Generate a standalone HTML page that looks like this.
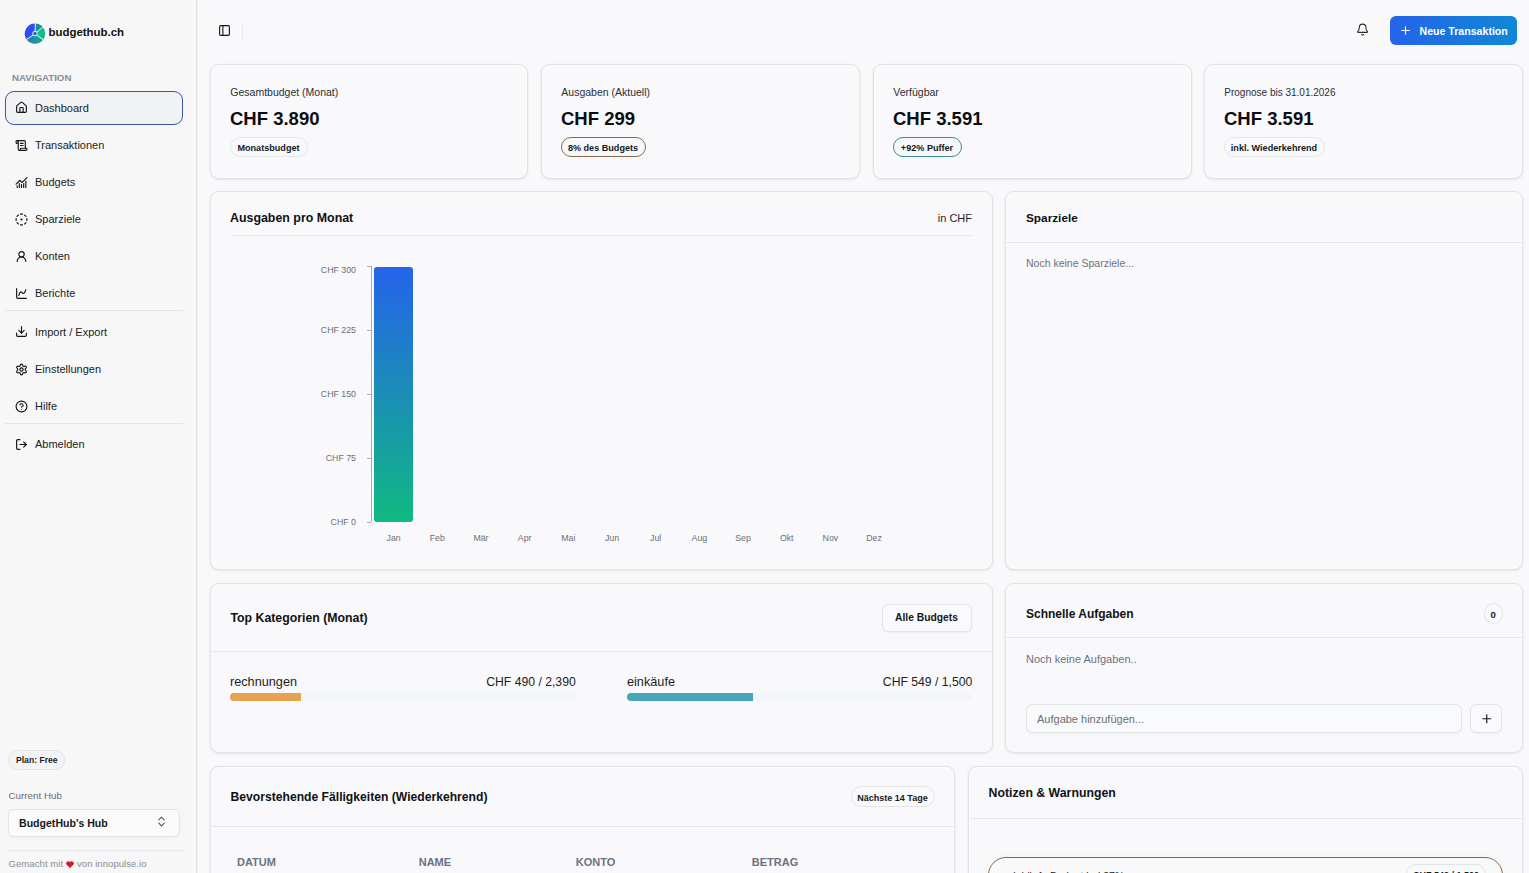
<!DOCTYPE html>
<html><head><meta charset="utf-8"><title>budgethub.ch</title>
<style>
html,body{margin:0;padding:0;}
body{width:1529px;height:873px;overflow:hidden;position:relative;background:#f9f9fb;font-family:"Liberation Sans",sans-serif;}
.t{position:absolute;white-space:nowrap;}
</style></head><body>
<div style="position:absolute;left:0px;top:0px;width:197px;height:873px;box-sizing:border-box;background:#f7f7f8;border-right:1px solid #e4e4e7;"></div>
<div style="position:absolute;left:193px;top:0px;width:1px;height:873px;box-sizing:border-box;background:#fcfcfd;"></div>
<div style="position:absolute;left:194px;top:0px;width:2px;height:873px;box-sizing:border-box;background:#f8f8fa;"></div>
<div style="position:absolute;left:197px;top:0px;width:1px;height:873px;box-sizing:border-box;background:#f2f2f4;"></div>
<svg style="position:absolute;left:24px;top:23px" width="22" height="22" viewBox="0 0 22 22">
<defs><linearGradient id="lgb" x1="0" y1="0" x2="1" y2="0"><stop offset="0" stop-color="#2476b8"/><stop offset="1" stop-color="#13b08c"/></linearGradient></defs>
<path d="M11 10.6 L2.64 16.45 A10.2 10.2 0 0 1 11.36 0.41 Z" fill="#3349f3"/>
<path d="M11 10.6 L11.36 0.41 A10.2 10.2 0 0 1 18.81 4.04 Z" fill="#1b8c9f"/>
<path d="M11 10.6 L18.81 4.04 A10.2 10.2 0 0 1 19.15 16.74 Z" fill="#10bd84"/>
<path d="M11 10.6 L19.15 16.74 A10.2 10.2 0 0 1 2.64 16.45 Z" fill="url(#lgb)"/>
<g stroke="#d4fbf3" stroke-width="1"><line x1="11" y1="10.6" x2="11.4" y2="0"/><line x1="11" y1="10.6" x2="19.3" y2="3.7"/><line x1="11" y1="10.6" x2="19.6" y2="17.1"/><line x1="11" y1="10.6" x2="2.2" y2="16.8"/></g>
<circle cx="11" cy="10.6" r="2.3" fill="#3d62b0" stroke="#d4fbf3" stroke-width="1"/>
</svg>
<div class="t" style="left:48.5px;top:26.97px;font-size:11.45px;line-height:11.45px;font-weight:700;color:#111;">budgethub.ch</div>
<div class="t" style="left:12px;top:72.75px;font-size:9.7px;line-height:9.7px;font-weight:700;color:#868d9b;">NAVIGATION</div>
<div style="position:absolute;left:5px;top:91px;width:178px;height:34px;box-sizing:border-box;background:#f1f2f4;border:1px solid #3d57a8;border-radius:9px;"></div>
<div class="t" style="left:35px;top:102.95px;font-size:11px;line-height:11px;font-weight:400;color:#1a1d22;">Dashboard</div>
<svg style="position:absolute;left:15.1px;top:101.1px" width="13" height="13" viewBox="0 0 24 24" fill="none" stroke="#121418" stroke-width="2.1" stroke-linecap="round" stroke-linejoin="round"><path d="M15 21v-8a1 1 0 0 0-1-1h-4a1 1 0 0 0-1 1v8"/><path d="M3 10a2 2 0 0 1 .709-1.528l7-5.999a2 2 0 0 1 2.582 0l7 5.999A2 2 0 0 1 21 10v9a2 2 0 0 1-2 2H5a2 2 0 0 1-2-2z"/></svg>
<div class="t" style="left:35px;top:140.35px;font-size:11px;line-height:11px;font-weight:400;color:#1a1d22;">Transaktionen</div>
<svg style="position:absolute;left:15.1px;top:138.5px" width="13" height="13" viewBox="0 0 24 24" fill="none" stroke="#121418" stroke-width="2.1" stroke-linecap="round" stroke-linejoin="round"><path d="M15 12h-5"/><path d="M15 8h-5"/><path d="M19 17V5a2 2 0 0 0-2-2H4"/><path d="M8 21h12a2 2 0 0 0 2-2v-1a1 1 0 0 0-1-1H11a1 1 0 0 0-1 1v1a2 2 0 1 1-4 0V5a2 2 0 1 0-4 0v2a1 1 0 0 0 1 1h3"/></svg>
<div class="t" style="left:35px;top:177.35px;font-size:11px;line-height:11px;font-weight:400;color:#1a1d22;">Budgets</div>
<svg style="position:absolute;left:15.1px;top:175.5px" width="13" height="13" viewBox="0 0 24 24" fill="none" stroke="#121418" stroke-width="2.1" stroke-linecap="round" stroke-linejoin="round"><path d="M12 16v5"/><path d="M16 14v7"/><path d="M20 10v11"/><path d="m22 3-8.646 8.646a.5.5 0 0 1-.708 0L9.354 8.354a.5.5 0 0 0-.707 0L2 15"/><path d="M4 18v3"/><path d="M8 14v7"/></svg>
<div class="t" style="left:35px;top:214.35px;font-size:11px;line-height:11px;font-weight:400;color:#1a1d22;">Sparziele</div>
<svg style="position:absolute;left:15.1px;top:212.5px" width="13" height="13" viewBox="0 0 24 24" fill="none" stroke="#121418" stroke-width="2.1" stroke-linecap="round" stroke-linejoin="round"><path d="M10.1 2.18a9.93 9.93 0 0 1 3.8 0"/><path d="M17.6 3.71a9.95 9.95 0 0 1 2.69 2.7"/><path d="M21.82 10.1a9.93 9.93 0 0 1 0 3.8"/><path d="M20.29 17.6a9.95 9.95 0 0 1-2.7 2.69"/><path d="M13.9 21.82a9.94 9.94 0 0 1-3.8 0"/><path d="M6.4 20.29a9.95 9.95 0 0 1-2.69-2.7"/><path d="M2.18 13.9a9.93 9.93 0 0 1 0-3.8"/><path d="M3.71 6.4a9.95 9.95 0 0 1 2.7-2.69"/><circle cx="12" cy="12" r="1"/></svg>
<div class="t" style="left:35px;top:251.35px;font-size:11px;line-height:11px;font-weight:400;color:#1a1d22;">Konten</div>
<svg style="position:absolute;left:15.1px;top:249.5px" width="13" height="13" viewBox="0 0 24 24" fill="none" stroke="#121418" stroke-width="2.1" stroke-linecap="round" stroke-linejoin="round"><circle cx="12" cy="8" r="5"/><path d="M20 21a8 8 0 0 0-16 0"/></svg>
<div class="t" style="left:35px;top:288.35px;font-size:11px;line-height:11px;font-weight:400;color:#1a1d22;">Berichte</div>
<svg style="position:absolute;left:15.1px;top:286.5px" width="13" height="13" viewBox="0 0 24 24" fill="none" stroke="#121418" stroke-width="2.1" stroke-linecap="round" stroke-linejoin="round"><path d="M3 3v16a2 2 0 0 0 2 2h16"/><path d="M7 16c.5-2 1.5-7 4-7 2 0 2 3 4 3 2.5 0 4.5-5 5-7"/></svg>
<div class="t" style="left:35px;top:326.65px;font-size:11px;line-height:11px;font-weight:400;color:#1a1d22;">Import / Export</div>
<svg style="position:absolute;left:15.1px;top:324.8px" width="13" height="13" viewBox="0 0 24 24" fill="none" stroke="#121418" stroke-width="2.1" stroke-linecap="round" stroke-linejoin="round"><path d="M21 15v4a2 2 0 0 1-2 2H5a2 2 0 0 1-2-2v-4"/><polyline points="7 10 12 15 17 10"/><line x1="12" x2="12" y1="15" y2="3"/></svg>
<div class="t" style="left:35px;top:364.35px;font-size:11px;line-height:11px;font-weight:400;color:#1a1d22;">Einstellungen</div>
<svg style="position:absolute;left:15.1px;top:362.5px" width="13" height="13" viewBox="0 0 24 24" fill="none" stroke="#121418" stroke-width="2.1" stroke-linecap="round" stroke-linejoin="round"><path d="M12.22 2h-.44a2 2 0 0 0-2 2v.18a2 2 0 0 1-1 1.73l-.43.25a2 2 0 0 1-2 0l-.15-.08a2 2 0 0 0-2.73.73l-.22.38a2 2 0 0 0 .73 2.73l.15.1a2 2 0 0 1 1 1.72v.51a2 2 0 0 1-1 1.74l-.15.09a2 2 0 0 0-.73 2.73l.22.38a2 2 0 0 0 2.73.73l.15-.08a2 2 0 0 1 2 0l.43.25a2 2 0 0 1 1 1.73V20a2 2 0 0 0 2 2h.44a2 2 0 0 0 2-2v-.18a2 2 0 0 1 1-1.73l.43-.25a2 2 0 0 1 2 0l.15.08a2 2 0 0 0 2.73-.73l.22-.39a2 2 0 0 0-.73-2.73l-.15-.08a2 2 0 0 1-1-1.74v-.5a2 2 0 0 1 1-1.74l.15-.09a2 2 0 0 0 .73-2.73l-.22-.38a2 2 0 0 0-2.73-.73l-.15.08a2 2 0 0 1-2 0l-.43-.25a2 2 0 0 1-1-1.73V4a2 2 0 0 0-2-2z"/><circle cx="12" cy="12" r="3"/></svg>
<div class="t" style="left:35px;top:401.35px;font-size:11px;line-height:11px;font-weight:400;color:#1a1d22;">Hilfe</div>
<svg style="position:absolute;left:15.1px;top:399.5px" width="13" height="13" viewBox="0 0 24 24" fill="none" stroke="#121418" stroke-width="2.1" stroke-linecap="round" stroke-linejoin="round"><circle cx="12" cy="12" r="10"/><path d="M9.09 9a3 3 0 0 1 5.83 1c0 2-3 3-3 3"/><path d="M12 17h.01"/></svg>
<div class="t" style="left:35px;top:439.35px;font-size:11px;line-height:11px;font-weight:400;color:#1a1d22;">Abmelden</div>
<svg style="position:absolute;left:15.1px;top:437.5px" width="13" height="13" viewBox="0 0 24 24" fill="none" stroke="#121418" stroke-width="2.1" stroke-linecap="round" stroke-linejoin="round"><path d="M9 21H5a2 2 0 0 1-2-2V5a2 2 0 0 1 2-2h4"/><polyline points="16 17 21 12 16 7"/><line x1="21" x2="9" y1="12" y2="12"/></svg>
<div style="position:absolute;left:5px;top:310px;width:178px;height:1px;box-sizing:border-box;background:#e4e5e8;"></div>
<div style="position:absolute;left:5px;top:423px;width:178px;height:1px;box-sizing:border-box;background:#e4e5e8;"></div>
<div style="position:absolute;left:8px;top:749.5px;width:57px;height:20px;box-sizing:border-box;background:#f4f4f6;border:1px solid #e4e4e7;border-radius:10px;"></div>
<div class="t" style="left:16px;top:756.39px;font-size:8.6px;line-height:8.6px;font-weight:700;color:#1a1d23;">Plan: Free</div>
<div class="t" style="left:8.5px;top:790.87px;font-size:9.8px;line-height:9.8px;font-weight:400;color:#686c73;">Current Hub</div>
<div style="position:absolute;left:8px;top:808.5px;width:172px;height:28.5px;box-sizing:border-box;background:#fbfbfb;border:1px solid #e3e4e7;border-radius:6px;box-shadow:0 1px 2px rgba(0,0,0,.04);"></div>
<div class="t" style="left:19px;top:817.52px;font-size:10.57px;line-height:10.57px;font-weight:700;color:#15181d;">BudgetHub's Hub</div>
<svg style="position:absolute;left:154.5px;top:814.5px" width="13" height="13" viewBox="0 0 24 24" fill="none" stroke="#555" stroke-width="2" stroke-linecap="round" stroke-linejoin="round"><path d="m7 15 5 5 5-5"/><path d="m7 9 5-5 5 5"/></svg>
<div style="position:absolute;left:7px;top:850px;width:177px;height:1px;box-sizing:border-box;background:#e6e7ea;"></div>
<div class="t" style="left:8.5px;top:859.00px;font-size:9.65px;line-height:9.65px;font-weight:400;color:#8a8e96;">Gemacht mit</div>
<svg style="position:absolute;left:66px;top:860.8px" width="8" height="7" viewBox="0 0 24 21"><path d="M12 21 L2.2 11.4 A6 6 0 0 1 12 3.2 A6 6 0 0 1 21.8 11.4 Z" fill="#dc1626"/></svg>
<div class="t" style="left:77px;top:859.00px;font-size:9.65px;line-height:9.65px;font-weight:400;color:#8a8e96;">von innopulse.io</div>
<svg style="position:absolute;left:218px;top:23.9px" width="13" height="13" viewBox="0 0 24 24" fill="none" stroke="#111" stroke-width="2" stroke-linecap="round" stroke-linejoin="round"><rect width="18" height="18" x="3" y="3" rx="2"/><path d="M9 3v18"/></svg>
<div style="position:absolute;left:242px;top:24px;width:1px;height:16px;box-sizing:border-box;background:#e8e9ec;"></div>
<svg style="position:absolute;left:1355.7px;top:23.3px" width="13.2" height="13.2" viewBox="0 0 24 24" fill="none" stroke="#2a2a2a" stroke-width="2" stroke-linecap="round" stroke-linejoin="round"><path d="M10.268 21a2 2 0 0 0 3.464 0"/><path d="M3.262 15.326A1 1 0 0 0 4 17h16a1 1 0 0 0 .74-1.673C19.41 13.956 18 12.499 18 8A6 6 0 0 0 6 8c0 4.499-1.411 5.956-2.738 7.326"/></svg>
<div style="position:absolute;left:1390px;top:16px;width:127px;height:29px;box-sizing:border-box;background:linear-gradient(90deg,#2563eb,#0f88d6);border-radius:6px;"></div>
<svg style="position:absolute;left:1398.8px;top:24.3px" width="13" height="13" viewBox="0 0 24 24" fill="none" stroke="#fff" stroke-width="2" stroke-linecap="round" stroke-linejoin="round"><path d="M5 12h14"/><path d="M12 5v14"/></svg>
<div class="t" style="left:1419.5px;top:25.89px;font-size:10.6px;line-height:10.6px;font-weight:700;color:#fff;">Neue Transaktion</div>
<div style="position:absolute;left:210px;top:64px;width:318px;height:115px;box-sizing:border-box;background:#f9f9fb;border:1px solid #e2e2e5;border-radius:9px;box-shadow:0 1px 3px rgba(0,0,0,.07),0 0 2px rgba(0,0,0,.03),inset 0 0 0 1px rgba(255,255,255,.55);"></div>
<div class="t" style="left:230.3px;top:87.48px;font-size:10.5px;line-height:10.5px;font-weight:400;color:#2b2e33;">Gesamtbudget (Monat)</div>
<div class="t" style="left:230px;top:109.98px;font-size:18.5px;line-height:18.5px;font-weight:700;color:#0b0d12;">CHF 3.890</div>
<div style="position:absolute;left:229.5px;top:137.3px;width:78px;height:20px;box-sizing:border-box;border:1px solid #e5e7eb;border-radius:10px;background:#f7f8fa;"></div>
<div class="t" style="left:-31.5px;width:600px;text-align:center;top:143.96px;font-size:9.1px;line-height:9.1px;font-weight:700;color:#15181d;">Monatsbudget</div>
<div style="position:absolute;left:541px;top:64px;width:319px;height:115px;box-sizing:border-box;background:#f9f9fb;border:1px solid #e2e2e5;border-radius:9px;box-shadow:0 1px 3px rgba(0,0,0,.07),0 0 2px rgba(0,0,0,.03),inset 0 0 0 1px rgba(255,255,255,.55);"></div>
<div class="t" style="left:561.3px;top:87.48px;font-size:10.5px;line-height:10.5px;font-weight:400;color:#2b2e33;">Ausgaben (Aktuell)</div>
<div class="t" style="left:561px;top:109.98px;font-size:18.5px;line-height:18.5px;font-weight:700;color:#0b0d12;">CHF 299</div>
<div style="position:absolute;left:560.5px;top:137.3px;width:85px;height:20px;box-sizing:border-box;border:1px solid #8a6a48;border-radius:10px;background:#f7f8fa;"></div>
<div class="t" style="left:303.0px;width:600px;text-align:center;top:143.96px;font-size:9.1px;line-height:9.1px;font-weight:700;color:#15181d;">8% des Budgets</div>
<div style="position:absolute;left:873px;top:64px;width:319px;height:115px;box-sizing:border-box;background:#f9f9fb;border:1px solid #e2e2e5;border-radius:9px;box-shadow:0 1px 3px rgba(0,0,0,.07),0 0 2px rgba(0,0,0,.03),inset 0 0 0 1px rgba(255,255,255,.55);"></div>
<div class="t" style="left:893.3px;top:87.48px;font-size:10.5px;line-height:10.5px;font-weight:400;color:#2b2e33;">Verfügbar</div>
<div class="t" style="left:893px;top:109.98px;font-size:18.5px;line-height:18.5px;font-weight:700;color:#0b0d12;">CHF 3.591</div>
<div style="position:absolute;left:892.5px;top:137.3px;width:69px;height:20px;box-sizing:border-box;border:1px solid #3f8797;border-radius:10px;background:#f7f8fa;"></div>
<div class="t" style="left:627.0px;width:600px;text-align:center;top:143.96px;font-size:9.1px;line-height:9.1px;font-weight:700;color:#15181d;">+92% Puffer</div>
<div style="position:absolute;left:1204px;top:64px;width:319px;height:115px;box-sizing:border-box;background:#f9f9fb;border:1px solid #e2e2e5;border-radius:9px;box-shadow:0 1px 3px rgba(0,0,0,.07),0 0 2px rgba(0,0,0,.03),inset 0 0 0 1px rgba(255,255,255,.55);"></div>
<div class="t" style="left:1224.3px;top:87.90px;font-size:10px;line-height:10px;font-weight:400;color:#2b2e33;">Prognose bis 31.01.2026</div>
<div class="t" style="left:1224px;top:109.98px;font-size:18.5px;line-height:18.5px;font-weight:700;color:#0b0d12;">CHF 3.591</div>
<div style="position:absolute;left:1223.5px;top:137.3px;width:101px;height:20px;box-sizing:border-box;border:1px solid #e5e7eb;border-radius:10px;background:#f7f8fa;"></div>
<div class="t" style="left:974.0px;width:600px;text-align:center;top:143.96px;font-size:9.1px;line-height:9.1px;font-weight:700;color:#15181d;">inkl. Wiederkehrend</div>
<div style="position:absolute;left:210px;top:191px;width:783px;height:379px;box-sizing:border-box;background:#f9f9fb;border:1px solid #e2e2e5;border-radius:9px;box-shadow:0 1px 3px rgba(0,0,0,.07),0 0 2px rgba(0,0,0,.03),inset 0 0 0 1px rgba(255,255,255,.55);"></div>
<div class="t" style="left:230px;top:212.16px;font-size:12.4px;line-height:12.4px;font-weight:700;color:#0f1115;">Ausgaben pro Monat</div>
<div class="t" style="left:372px;width:600px;text-align:right;top:213.35px;font-size:11px;line-height:11px;font-weight:400;color:#1f2227;">in CHF</div>
<div style="position:absolute;left:231px;top:235px;width:741px;height:1px;box-sizing:border-box;background:#e6e7ea;"></div>
<div style="position:absolute;left:371px;top:266px;width:1px;height:256px;box-sizing:border-box;background:#a9adb3;"></div>
<div style="position:absolute;left:367px;top:265.5px;width:4px;height:1px;box-sizing:border-box;background:#a9adb3;"></div>
<div class="t" style="left:-244px;width:600px;text-align:right;top:266.22px;font-size:8.8px;line-height:8.8px;font-weight:400;color:#6b6f76;">CHF 300</div>
<div style="position:absolute;left:367px;top:329.5px;width:4px;height:1px;box-sizing:border-box;background:#a9adb3;"></div>
<div class="t" style="left:-244px;width:600px;text-align:right;top:326.42px;font-size:8.8px;line-height:8.8px;font-weight:400;color:#6b6f76;">CHF 225</div>
<div style="position:absolute;left:367px;top:393.5px;width:4px;height:1px;box-sizing:border-box;background:#a9adb3;"></div>
<div class="t" style="left:-244px;width:600px;text-align:right;top:390.42px;font-size:8.8px;line-height:8.8px;font-weight:400;color:#6b6f76;">CHF 150</div>
<div style="position:absolute;left:367px;top:457.5px;width:4px;height:1px;box-sizing:border-box;background:#a9adb3;"></div>
<div class="t" style="left:-244px;width:600px;text-align:right;top:454.42px;font-size:8.8px;line-height:8.8px;font-weight:400;color:#6b6f76;">CHF 75</div>
<div style="position:absolute;left:367px;top:521.5px;width:4px;height:1px;box-sizing:border-box;background:#a9adb3;"></div>
<div class="t" style="left:-244px;width:600px;text-align:right;top:518.42px;font-size:8.8px;line-height:8.8px;font-weight:400;color:#6b6f76;">CHF 0</div>
<div style="position:absolute;left:374px;top:267px;width:38.5px;height:255px;box-sizing:border-box;background:linear-gradient(180deg,#2563eb,#10b981);border-radius:3px;"></div>
<div class="t" style="left:93.60000000000002px;width:600px;text-align:center;top:534.22px;font-size:8.8px;line-height:8.8px;font-weight:400;color:#6b6f76;">Jan</div>
<div class="t" style="left:137.28000000000003px;width:600px;text-align:center;top:534.22px;font-size:8.8px;line-height:8.8px;font-weight:400;color:#6b6f76;">Feb</div>
<div class="t" style="left:180.96000000000004px;width:600px;text-align:center;top:534.22px;font-size:8.8px;line-height:8.8px;font-weight:400;color:#6b6f76;">Mär</div>
<div class="t" style="left:224.64px;width:600px;text-align:center;top:534.22px;font-size:8.8px;line-height:8.8px;font-weight:400;color:#6b6f76;">Apr</div>
<div class="t" style="left:268.32000000000005px;width:600px;text-align:center;top:534.22px;font-size:8.8px;line-height:8.8px;font-weight:400;color:#6b6f76;">Mai</div>
<div class="t" style="left:312.0px;width:600px;text-align:center;top:534.22px;font-size:8.8px;line-height:8.8px;font-weight:400;color:#6b6f76;">Jun</div>
<div class="t" style="left:355.68000000000006px;width:600px;text-align:center;top:534.22px;font-size:8.8px;line-height:8.8px;font-weight:400;color:#6b6f76;">Jul</div>
<div class="t" style="left:399.36px;width:600px;text-align:center;top:534.22px;font-size:8.8px;line-height:8.8px;font-weight:400;color:#6b6f76;">Aug</div>
<div class="t" style="left:443.03999999999996px;width:600px;text-align:center;top:534.22px;font-size:8.8px;line-height:8.8px;font-weight:400;color:#6b6f76;">Sep</div>
<div class="t" style="left:486.72px;width:600px;text-align:center;top:534.22px;font-size:8.8px;line-height:8.8px;font-weight:400;color:#6b6f76;">Okt</div>
<div class="t" style="left:530.4000000000001px;width:600px;text-align:center;top:534.22px;font-size:8.8px;line-height:8.8px;font-weight:400;color:#6b6f76;">Nov</div>
<div class="t" style="left:574.08px;width:600px;text-align:center;top:534.22px;font-size:8.8px;line-height:8.8px;font-weight:400;color:#6b6f76;">Dez</div>
<div style="position:absolute;left:1005px;top:191px;width:518px;height:379px;box-sizing:border-box;background:#f9f9fb;border:1px solid #e2e2e5;border-radius:9px;box-shadow:0 1px 3px rgba(0,0,0,.07),0 0 2px rgba(0,0,0,.03),inset 0 0 0 1px rgba(255,255,255,.55);"></div>
<div class="t" style="left:1026px;top:212.67px;font-size:11.8px;line-height:11.8px;font-weight:700;color:#0f1115;">Sparziele</div>
<div style="position:absolute;left:1006px;top:242px;width:516px;height:1px;box-sizing:border-box;background:#e6e7ea;"></div>
<div class="t" style="left:1026px;top:258.27px;font-size:10.5px;line-height:10.5px;font-weight:400;color:#6b7280;">Noch keine Sparziele...</div>
<div style="position:absolute;left:210px;top:583px;width:783px;height:170px;box-sizing:border-box;background:#f9f9fb;border:1px solid #e2e2e5;border-radius:9px;box-shadow:0 1px 3px rgba(0,0,0,.07),0 0 2px rgba(0,0,0,.03),inset 0 0 0 1px rgba(255,255,255,.55);"></div>
<div class="t" style="left:230.5px;top:612.25px;font-size:12.3px;line-height:12.3px;font-weight:700;color:#0f1115;">Top Kategorien (Monat)</div>
<div style="position:absolute;left:881.5px;top:603.5px;width:90px;height:28px;box-sizing:border-box;background:#f9fafb;border:1px solid #e3e4e7;border-radius:6px;box-shadow:0 1px 2px rgba(0,0,0,.05);"></div>
<div class="t" style="left:626.5px;width:600px;text-align:center;top:612.95px;font-size:10.3px;line-height:10.3px;font-weight:700;color:#15181d;">Alle Budgets</div>
<div style="position:absolute;left:212px;top:651px;width:780px;height:1px;box-sizing:border-box;background:#e6e7ea;"></div>
<div class="t" style="left:230px;top:675.61px;font-size:12.7px;line-height:12.7px;font-weight:400;color:#1a1d22;">rechnungen</div>
<div class="t" style="left:-24.299999999999955px;width:600px;text-align:right;top:676.03px;font-size:12.2px;line-height:12.2px;font-weight:400;color:#1a1d22;">CHF 490 / 2,390</div>
<div style="position:absolute;left:230px;top:693px;width:346px;height:8px;box-sizing:border-box;background:#f2f5fc;border-radius:4px;"></div>
<div style="position:absolute;left:230px;top:693px;width:71px;height:8px;box-sizing:border-box;background:#e6a352;border-radius:4px 0 0 4px;"></div>
<div class="t" style="left:627px;top:675.61px;font-size:12.7px;line-height:12.7px;font-weight:400;color:#1a1d22;">einkäufe</div>
<div class="t" style="left:372.29999999999995px;width:600px;text-align:right;top:676.03px;font-size:12.2px;line-height:12.2px;font-weight:400;color:#1a1d22;">CHF 549 / 1,500</div>
<div style="position:absolute;left:627px;top:693px;width:345px;height:8px;box-sizing:border-box;background:#f2f5fc;border-radius:4px;"></div>
<div style="position:absolute;left:627px;top:693px;width:126px;height:8px;box-sizing:border-box;background:#46a6ba;border-radius:4px 0 0 4px;"></div>
<div style="position:absolute;left:1005px;top:583px;width:518px;height:170px;box-sizing:border-box;background:#f9f9fb;border:1px solid #e2e2e5;border-radius:9px;box-shadow:0 1px 3px rgba(0,0,0,.07),0 0 2px rgba(0,0,0,.03),inset 0 0 0 1px rgba(255,255,255,.55);"></div>
<div class="t" style="left:1026px;top:608.00px;font-size:12px;line-height:12px;font-weight:700;color:#0f1115;">Schnelle Aufgaben</div>
<div style="position:absolute;left:1483.5px;top:603px;width:19.5px;height:20.5px;box-sizing:border-box;border:1px solid #e3e4e7;border-radius:50%;background:#f9fafb;"></div>
<div class="t" style="left:1193.2px;width:600px;text-align:center;top:609.74px;font-size:9.6px;line-height:9.6px;font-weight:700;color:#15181d;">0</div>
<div style="position:absolute;left:1006px;top:637px;width:516px;height:1px;box-sizing:border-box;background:#e6e7ea;"></div>
<div class="t" style="left:1026px;top:653.85px;font-size:11px;line-height:11px;font-weight:400;color:#6b7280;">Noch keine Aufgaben..</div>
<div style="position:absolute;left:1026px;top:704px;width:436px;height:29px;box-sizing:border-box;background:#f9fafb;border:1px solid #e3e4e7;border-radius:6px;box-shadow:0 1px 2px rgba(0,0,0,.04);"></div>
<div class="t" style="left:1037px;top:713.85px;font-size:11px;line-height:11px;font-weight:400;color:#6b6f76;">Aufgabe hinzufügen...</div>
<div style="position:absolute;left:1470px;top:704px;width:32px;height:29px;box-sizing:border-box;background:#f9fafb;border:1px solid #e3e4e7;border-radius:6px;box-shadow:0 1px 2px rgba(0,0,0,.04);"></div>
<svg style="position:absolute;left:1479.6px;top:712px" width="13.5" height="13.5" viewBox="0 0 24 24" fill="none" stroke="#111" stroke-width="2" stroke-linecap="round" stroke-linejoin="round"><path d="M5 12h14"/><path d="M12 5v14"/></svg>
<div style="position:absolute;left:210px;top:766px;width:745px;height:140px;box-sizing:border-box;background:#f9f9fb;border:1px solid #e2e2e5;border-radius:9px;box-shadow:0 1px 3px rgba(0,0,0,.07),0 0 2px rgba(0,0,0,.03),inset 0 0 0 1px rgba(255,255,255,.55);"></div>
<div class="t" style="left:230.5px;top:790.87px;font-size:12.15px;line-height:12.15px;font-weight:700;color:#0f1115;">Bevorstehende Fälligkeiten (Wiederkehrend)</div>
<div style="position:absolute;left:850.5px;top:786px;width:84px;height:21px;box-sizing:border-box;border:1px solid #e3e4e7;border-radius:11px;background:#f9fafb;"></div>
<div class="t" style="left:592.5px;width:600px;text-align:center;top:793.55px;font-size:9px;line-height:9px;font-weight:700;color:#15181d;">Nächste 14 Tage</div>
<div style="position:absolute;left:212px;top:826px;width:742px;height:1px;box-sizing:border-box;background:#e6e7ea;"></div>
<div class="t" style="left:237px;top:856.95px;font-size:11px;line-height:11px;font-weight:700;color:#6b7280;">DATUM</div>
<div class="t" style="left:418.7px;top:856.95px;font-size:11px;line-height:11px;font-weight:700;color:#6b7280;">NAME</div>
<div class="t" style="left:575.7px;top:856.95px;font-size:11px;line-height:11px;font-weight:700;color:#6b7280;">KONTO</div>
<div class="t" style="left:751.8px;top:856.95px;font-size:11px;line-height:11px;font-weight:700;color:#6b7280;">BETRAG</div>
<div style="position:absolute;left:968px;top:766px;width:555px;height:140px;box-sizing:border-box;background:#f9f9fb;border:1px solid #e2e2e5;border-radius:9px;box-shadow:0 1px 3px rgba(0,0,0,.07),0 0 2px rgba(0,0,0,.03),inset 0 0 0 1px rgba(255,255,255,.55);"></div>
<div class="t" style="left:988.5px;top:787.25px;font-size:12.3px;line-height:12.3px;font-weight:700;color:#0f1115;">Notizen &amp; Warnungen</div>
<div style="position:absolute;left:970px;top:818px;width:552px;height:1px;box-sizing:border-box;background:#e6e7ea;"></div>
<div style="position:absolute;left:988px;top:857px;width:515px;height:60px;box-sizing:border-box;border:1.3px solid #7d6b57;border-radius:18px;background:#f9f9fa;box-shadow:0 -2px 8px rgba(245,170,80,.07);"></div>
<div class="t" style="left:1007.5px;top:870.58px;font-size:10.5px;line-height:10.5px;font-weight:400;color:#222;">einkäufe Budget bei 37%</div>
<div style="position:absolute;left:1406px;top:864px;width:80px;height:20px;box-sizing:border-box;border:1px solid #e3e4e7;border-radius:10px;background:#f9fafb;"></div>
<div class="t" style="left:1146px;width:600px;text-align:center;top:871.05px;font-size:9px;line-height:9px;font-weight:700;color:#15181d;">CHF 549 / 1,500</div>
</body></html>
